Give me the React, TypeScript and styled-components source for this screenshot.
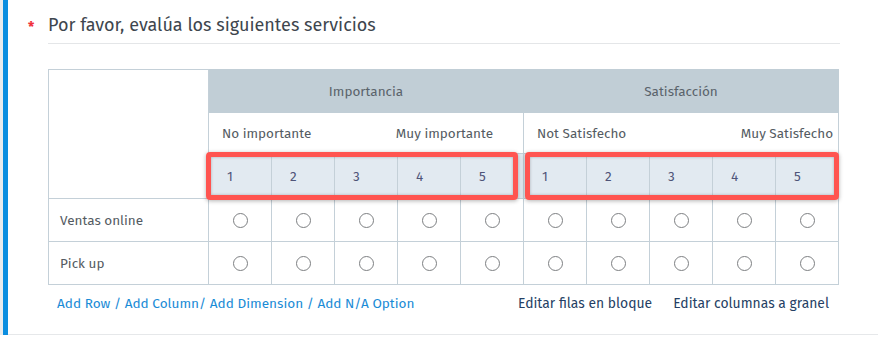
import React from "react"
import styled, { createGlobalStyle } from "styled-components"

const GlobalStyle = createGlobalStyle`
  html, body {
    margin: 0;
    padding: 0;
    background: #ffffff;
  }

  body {
    font-family: "Fira Sans", "Open Sans", "Noto Sans", sans-serif;
    color: #4a525a;
  }
`

// Data
const scale = [1, 2, 3, 4, 5]
const rows = ["Ventas online", "Pick up"]
const dimensions = [
  { title: "Importancia", low: "No importante", high: "Muy importante", tail: 30 },
  { title: "Satisfacción", low: "Not Satisfecho", high: "Muy Satisfecho", tail: 5 },
]
const addLinks = ["Add Row", "Add Column", "Add Dimension", "Add N/A Option"]

const App: React.FC = () => {
  return (
    <>
      <GlobalStyle />
      <Page>
        <Edge />
        <Rail />
        <Content>
          <Question>
            <Asterisk>*</Asterisk>
            <Title>Por favor, evalúa los siguientes servicios</Title>
          </Question>

          <Body>
            <GridWrap>
              <Matrix>
                <colgroup>
                  <col style={{ width: 160 }} />
                  {dimensions.flatMap((d) =>
                    scale.map((n) => <col key={d.title + n} style={{ width: 63 }} />)
                  )}
                </colgroup>
                <tbody>
                  <tr>
                    <Corner rowSpan={3} />
                    {dimensions.map((d) => (
                      <DimHead key={d.title} colSpan={5}>
                        {d.title}
                      </DimHead>
                    ))}
                  </tr>
                  <tr>
                    {dimensions.map((d) => (
                      <AnchorCell key={d.title} colSpan={5}>
                        <Anchors $tail={d.tail}>
                          <span>{d.low}</span>
                          <span>{d.high}</span>
                        </Anchors>
                      </AnchorCell>
                    ))}
                  </tr>
                  <tr>
                    {dimensions.flatMap((d) =>
                      scale.map((n) => <ScaleCell key={d.title + n}>{n}</ScaleCell>)
                    )}
                  </tr>
                  {rows.map((label) => (
                    <tr key={label}>
                      <RowLabel>{label}</RowLabel>
                      {dimensions.flatMap((d) =>
                        scale.map((n) => (
                          <ChoiceCell key={d.title + n}>
                            <Radio />
                          </ChoiceCell>
                        ))
                      )}
                    </tr>
                  ))}
                </tbody>
              </Matrix>

              <Highlight $left={158} $width={312} />
              <Highlight $left={477} $width={314} />
            </GridWrap>

            <Actions>
              <AddGroup>
                {addLinks.map((label, i) => (
                  <React.Fragment key={label}>
                    {i > 0 && <Sep>{i === 2 ? "/ " : " / "}</Sep>}
                    <AddLink>{label}</AddLink>
                  </React.Fragment>
                ))}
              </AddGroup>
              <BulkGroup>
                <BulkLink>Editar filas en bloque</BulkLink>
                <BulkLink>Editar columnas a granel</BulkLink>
              </BulkGroup>
            </Actions>
          </Body>
        </Content>
      </Page>
    </>
  )
}

const Page = styled.div`
  display: flex;
  width: 878px;
  height: 337px;
  overflow: hidden;
`

const Edge = styled.div`
  width: 3px;
  height: 335px;
  background: #e9ecee;
`

const Rail = styled.div`
  width: 5px;
  height: 335px;
  background: #0b8ee0;
`

const Content = styled.div`
  flex: 1;
  height: 334px;
  padding-left: 20px;
  padding-right: 38px;
  border-bottom: 1px solid #e6e8ea;
`

const Question = styled.div`
  display: flex;
  align-items: stretch;
  height: 44px;
`

const Asterisk = styled.div`
  width: 20px;
  padding-top: 21px;
  box-sizing: border-box;
  color: #f0323c;
  font-size: 14px;
  font-weight: 700;
  line-height: 14px;
`

const Title = styled.h1`
  flex: 1;
  margin: 0;
  padding-top: 13px;
  box-sizing: border-box;
  border-bottom: 1px solid #e4e6e8;
  font-size: 18px;
  font-weight: 400;
  line-height: 24px;
  color: #3e464e;
`

const Body = styled.div`
  margin-left: 20px;
  padding-top: 25px;
  width: 791px;
`

const GridWrap = styled.div`
  position: relative;
`

const Matrix = styled.table`
  border-collapse: collapse;
  table-layout: fixed;
  width: 791px;
  font-size: 13.5px;
  color: #545b62;

  td {
    padding: 0;
  }
`

const Corner = styled.td`
  border: 1px solid #c4d0d8;
  background: #ffffff;
`

const DimHead = styled.td`
  height: 43px;
  background: #c1ced6;
  border-top: 1px solid #c1ced6;
  border-right: 1px solid #c1ced6;
  text-align: center;
  color: #5a636b;
`

const AnchorCell = styled.td`
  height: 40px;
  border-right: 1px solid #c4d0d8;
  padding-left: 13px !important;
`

const Anchors = styled.div<{ $tail: number }>`
  display: flex;
  justify-content: space-between;
  align-items: center;
  padding-right: ${(p) => p.$tail}px;
`

const ScaleCell = styled.td`
  height: 44px;
  background: #e2eaf1;
  border: 1px solid #c4d0d8;
  padding-left: 18px !important;
  color: #4f5478;
`

const RowLabel = styled.td`
  height: 42px;
  border: 1px solid #c4d0d8;
  padding-left: 11px !important;
`

const ChoiceCell = styled.td`
  border: 1px solid #c4d0d8;
  text-align: center;
  vertical-align: middle;
`

const Radio = styled.span`
  display: inline-block;
  width: 13px;
  height: 13px;
  border: 1.2px solid #7d7f82;
  border-radius: 50%;
  vertical-align: middle;
`

const Highlight = styled.div<{ $left: number; $width: number }>`
  position: absolute;
  top: 83px;
  left: ${(p) => p.$left}px;
  width: ${(p) => p.$width}px;
  height: 48px;
  box-sizing: border-box;
  border: 5px solid #ff5450;
  border-radius: 4px;
  box-shadow: 0 1px 4px rgba(0, 0, 0, 0.3), inset 0 0 3px rgba(0, 0, 0, 0.25);
  pointer-events: none;
`

const Actions = styled.div`
  display: flex;
  justify-content: space-between;
  align-items: center;
  margin-top: 9px;
  padding: 0 10px 0 9px;
  font-size: 13.6px;
  line-height: 19px;
`

const AddGroup = styled.div`
  color: #1a8bd6;
  white-space: pre;
`

const Sep = styled.span``

const AddLink = styled.a`
  cursor: pointer;
`

const BulkGroup = styled.div`
  display: flex;
  gap: 21px;
`

const BulkLink = styled.a`
  color: #263f64;
  font-size: 13.9px;
  cursor: pointer;
`

export default App
